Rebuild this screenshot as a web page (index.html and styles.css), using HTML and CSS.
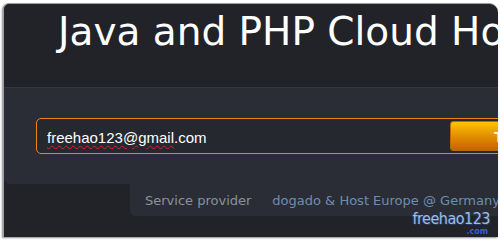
FILE: index.html
```html
<!DOCTYPE html>
<html lang="en">
<head>
  <meta charset="UTF-8">
  <title>Java and PHP Cloud Hosting</title>
  <link rel="stylesheet" href="styles.css">
</head>
<body>
  <div class="frame">
      <div class="hero">
          <h1 class="title">Java and PHP Cloud Hosting</h1>
      </div>
      <div class="signup">
          <div class="field">
              <span class="email"><span class="typo">freehao123@gmail</span>.com</span>
              <button class="try">Try it free</button>
          </div>
      </div>
      <div class="provider">
          <span class="label">Service provider</span>
          <span class="name">dogado &amp; Host Europe @ Germany</span>
      </div>
      <!-- watermark over the corner -->
      <div class="mark">
          <span class="mark-main">freehao123</span>
          <span class="mark-com">.com</span>
      </div>
  </div>
</body>
</html>
```

FILE: styles.css
```css
body {
    margin: 0;
    padding: 0;
    background: #ffffff;
    font-family: 'DejaVu Sans', Verdana, sans-serif;
}
.frame {
    position: relative;
    margin: 3px;
    width: 494px;
    height: 233px;
    background: #212329;
    border: 1px solid #9c9ea8;
    border-right: none;
    border-bottom: none;
    border-radius: 6px 9px 0 0;
    box-shadow: -1px 1px 2px rgba(0, 0, 0, 0.45);
    overflow: hidden;
}
.hero {
    height: 83px;
}
.title {
    margin: 0;
    padding: 5px 0 0 54px;
    font-size: 39px;
    font-weight: 400;
    line-height: 46px;
    color: #ffffff;
    white-space: nowrap;
}
.signup {
    display: flex;
    align-items: center;
    height: 96px;
    padding-left: 32px;
    background: #2a2d35;
    border-top: 1px solid #343740;
    border-radius: 0 0 0 6px;
}
.field {
    display: grid;
    grid-template-columns: 403px 120px;
    align-items: center;
    flex-shrink: 0;
    width: 540px;
    height: 34px;
    padding-left: 10px;
    background: #262830;
    border: 1px solid #f0861a;
    border-radius: 5px;
}
.email {
    font-family: 'Liberation Sans', Arial, sans-serif;
    font-size: 15px;
    color: #ffffff;
    padding-top: 2px;
}
.typo {
    text-decoration: underline wavy #e0201c;
    text-decoration-thickness: 1px;
    text-underline-offset: 2px;
}
.try {
    height: 30px;
    margin: 0;
    padding: 0 0 0 43px;
    text-align: left;
    font-family: 'Liberation Sans', Arial, sans-serif;
    font-size: 15px;
    font-weight: 700;
    color: #ffffff;
    background: linear-gradient(#ffc400, #e08a00 55%, #c86400);
    border: 1px solid #b86a00;
    border-radius: 3px;
    white-space: nowrap;
}
.provider {
    display: flex;
    align-items: center;
    height: 32px;
    margin-left: 126px;
    padding-left: 15px;
    background: #2a2d36;
    border-radius: 0 0 0 6px;
    font-size: 13px;
    white-space: nowrap;
}
.label {
    color: #8b929c;
}
.name {
    margin-left: 21px;
    color: #6f8db0;
}
.mark {
    position: absolute;
    right: 8px;
    bottom: 1px;
    display: flex;
    flex-direction: column;
    align-items: flex-end;
    line-height: 1;
}
.mark-main {
    font-family: 'DejaVu Sans Condensed', 'DejaVu Sans', sans-serif;
    font-size: 16px;
    letter-spacing: -0.5px;
    color: #9dbde0;
    text-shadow: 1px 1px 0 #2a3a66, -1px 0 0 #2a3a66;
}
.mark-com {
    margin-top: 1px;
    margin-right: 2px;
    font-size: 8px;
    font-weight: 700;
    color: #3b5fd6;
}
```
